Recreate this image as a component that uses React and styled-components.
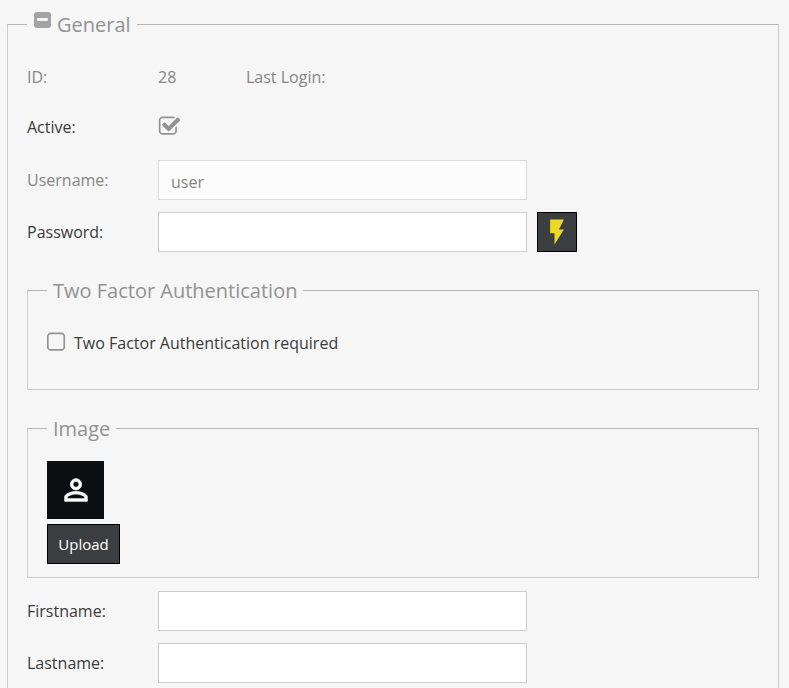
import React, { useState } from "react";
import styled, { createGlobalStyle } from "styled-components";

const GlobalStyle = createGlobalStyle`
  *, *::before, *::after { box-sizing: border-box; }
  body {
    margin: 0;
    background: #f6f6f6;
    color: #3a3a3a;
    font-family: "Open Sans", "Noto Sans", sans-serif;
    font-size: 16px;
    line-height: 24px;
  }
`;

const Page = styled.main`
  padding: 9px 10px 0 7px;
  height: 100vh;
  overflow: hidden;
`;

const Group = styled.fieldset`
  min-width: 0;
  margin: 0;
  padding: 18px 19px 40px;
  border: 1px solid #cccccc;
  border-top-color: #b5b5b5;
`;

const SubGroup = styled(Group)`
  margin: 23px 0 13px;
  padding-bottom: ${(p) => p.$bottom}px;
`;

const Legend = styled.legend`
  padding: 2px 6px 0;
  color: #929292;
  font-size: 20px;
  line-height: 28px;
`;

const Toggle = styled.button`
  padding: 0;
  border: 0;
  background: none;
  color: #a3a3a3;
  line-height: 0;
  vertical-align: 2px;
  margin-right: 5px;
`;

const Rows = styled.div`
  display: grid;
  gap: ${(p) => p.$gap}px;
  margin-bottom: ${(p) => p.$after || 0}px;
`;

const Row = styled.div`
  display: grid;
  grid-template-columns: 131px minmax(0, 369px) auto 1fr;
  align-items: center;
  min-height: 40px;
  color: ${(p) => (p.$muted ? "#858585" : "inherit")};
`;

const Meta = styled.div`
  display: grid;
  grid-template-columns: 88px auto;
`;

const TextInput = styled.input`
  width: 100%;
  height: 40px;
  padding: 3px 12px 0;
  border: 1px solid #cccccc;
  border-radius: 0;
  background: #ffffff;
  color: #3a3a3a;
  font: inherit;
  outline: none;

  &:disabled {
    border-color: #dadada;
    background: #fcfcfc;
    color: #858585;
  }
`;

const DarkButton = styled.button`
  display: flex;
  align-items: center;
  justify-content: center;
  min-width: 73px;
  height: 40px;
  padding: 0 10px;
  border: 1px solid #000000;
  border-radius: 0;
  background: #3c3f42;
  color: #ffffff;
  font: inherit;
  font-size: 15px;
`;

const IconButton = styled(DarkButton)`
  min-width: 0;
  width: 40px;
  margin-left: 10px;
  padding: 0;
  color: #ecd827;
`;

const CheckBox = styled.span`
  display: inline-grid;
  width: 23px;
  height: 23px;
  color: #929292;

  & > * { grid-area: 1 / 1; }
  svg { overflow: visible; }
  input { width: 100%; height: 100%; margin: 0; opacity: 0; z-index: 1; }
`;

const CheckLabel = styled.label`
  display: flex;
  align-items: center;
  gap: 4px;
  height: 40px;
`;

const Avatar = styled.div`
  display: grid;
  place-items: center;
  width: 57px;
  height: 58px;
  margin-bottom: 5px;
  background: #0b0f12;
  color: #ffffff;
`;

function Icon({ size, box, children }) {
  return (
    <svg width={size} height={size} viewBox={box} fill="currentColor" aria-hidden="true">
      {children}
    </svg>
  );
}

function Check({ id, initial }) {
  const [on, setOn] = useState(initial);
  return (
    <CheckBox>
      <input id={id} type="checkbox" checked={on} onChange={() => setOn(!on)} />
      <Icon size={23} box={on ? "0 80 1792 1792" : "192 80 1792 1792"}>
        {on ? (
          <path d="M1472 930v318q0 119-84.5 203.5t-203.5 84.5h-832q-119 0-203.5-84.5t-84.5-203.5v-832q0-119 84.5-203.5t203.5-84.5h832q63 0 117 25 15 7 18 23 3 17-9 29l-49 49q-10 10-23 10-3 0-9-2-23-6-45-6h-832q-66 0-113 47t-47 113v832q0 66 47 113t113 47h832q66 0 113-47t47-113v-254q0-13 9-22l64-64q10-10 23-10 6 0 12 3 20 8 20 29zm231-489l-814 814q-24 24-57 24t-57-24l-430-430q-24-24-24-57t24-57l110-110q24-24 57-24t57 24l263 263 647-647q24-24 57-24t57 24l110 110q24 24 24 57t-24 57z" />
        ) : (
          <path d="M1312 256h-832q-66 0-113 47t-47 113v832q0 66 47 113t113 47h832q66 0 113-47t47-113v-832q0-66-47-113t-113-47zm288 160v832q0 119-84.500 203.500t-203.500 84.500h-832q-119 0-203.500-84.500t-84.500-203.500v-832q0-119 84.500-203.500t203.500-84.500h832q119 0 203.500 84.500t84.500 203.500z" />
        )}
      </Icon>
    </CheckBox>
  );
}

function Field({ id, label, type = "text", disabled, value, children }) {
  return (
    <Row $muted={disabled}>
      <label htmlFor={id}>{label}</label>
      <TextInput id={id} type={type} disabled={disabled} defaultValue={value} />
      {children}
    </Row>
  );
}

export default function App() {
  return (
    <>
      <GlobalStyle />
      <Page>
        <Group>
          <Legend>
            <Toggle type="button" aria-label="Collapse General">
              <Icon size={19} box="0 0 19 19">
                <rect x="1" y="1" width="17" height="16" rx="3" />
                <rect x="4" y="7" width="11" height="3" rx="1" fill="#f6f6f6" />
              </Icon>
            </Toggle>
            General
          </Legend>
          <Rows $gap={10} $after={13}>
            <Row $muted>
              <span>ID:</span>
              <Meta>
                <span>28</span>
                <span>Last Login:</span>
              </Meta>
            </Row>
            <Row>
              <label htmlFor="active">Active:</label>
              <Check id="active" initial={true} />
            </Row>
          </Rows>
          <Rows $gap={12}>
            <Field id="username" label="Username:" value="user" disabled />
            <Field id="password" label="Password:" type="password">
              <IconButton type="button" aria-label="Generate password">
                <Icon size={30} box="0 0 24 24">
                  <path d="M6.500 2v11h3.500v9l7.500-12h-4l4-8z" />
                </Icon>
              </IconButton>
            </Field>
          </Rows>
          <SubGroup $bottom={26}>
            <Legend>Two Factor Authentication</Legend>
            <CheckLabel>
              <Check id="twofactor" initial={false} />
              Two Factor Authentication required
            </CheckLabel>
          </SubGroup>
          <SubGroup $bottom={13}>
            <Legend>Image</Legend>
            <Avatar role="img" aria-label="User image">
              <Icon size={34} box="0 0 24 24">
                <path
                  stroke="currentColor"
                  strokeWidth="0.5"
                  d="M12 5.900c1.160 0 2.100.940 2.100 2.100s-.940 2.100-2.100 2.100S9.900 9.160 9.900 8s.940-2.100 2.100-2.100m0 9c2.970 0 6.100 1.460 6.100 2.100v1.100H5.900V17c0-.640 3.130-2.100 6.100-2.100M12 4C9.790 4 8 5.790 8 8s1.790 4 4 4 4-1.790 4-4-1.790-4-4-4zm0 9c-2.670 0-8 1.340-8 4v3h16v-3c0-2.660-5.330-4-8-4z"
                />
              </Icon>
            </Avatar>
            <DarkButton type="button">Upload</DarkButton>
          </SubGroup>
          <Rows $gap={12}>
            <Field id="firstname" label="Firstname:" />
            <Field id="lastname" label="Lastname:" />
          </Rows>
        </Group>
      </Page>
    </>
  );
}
